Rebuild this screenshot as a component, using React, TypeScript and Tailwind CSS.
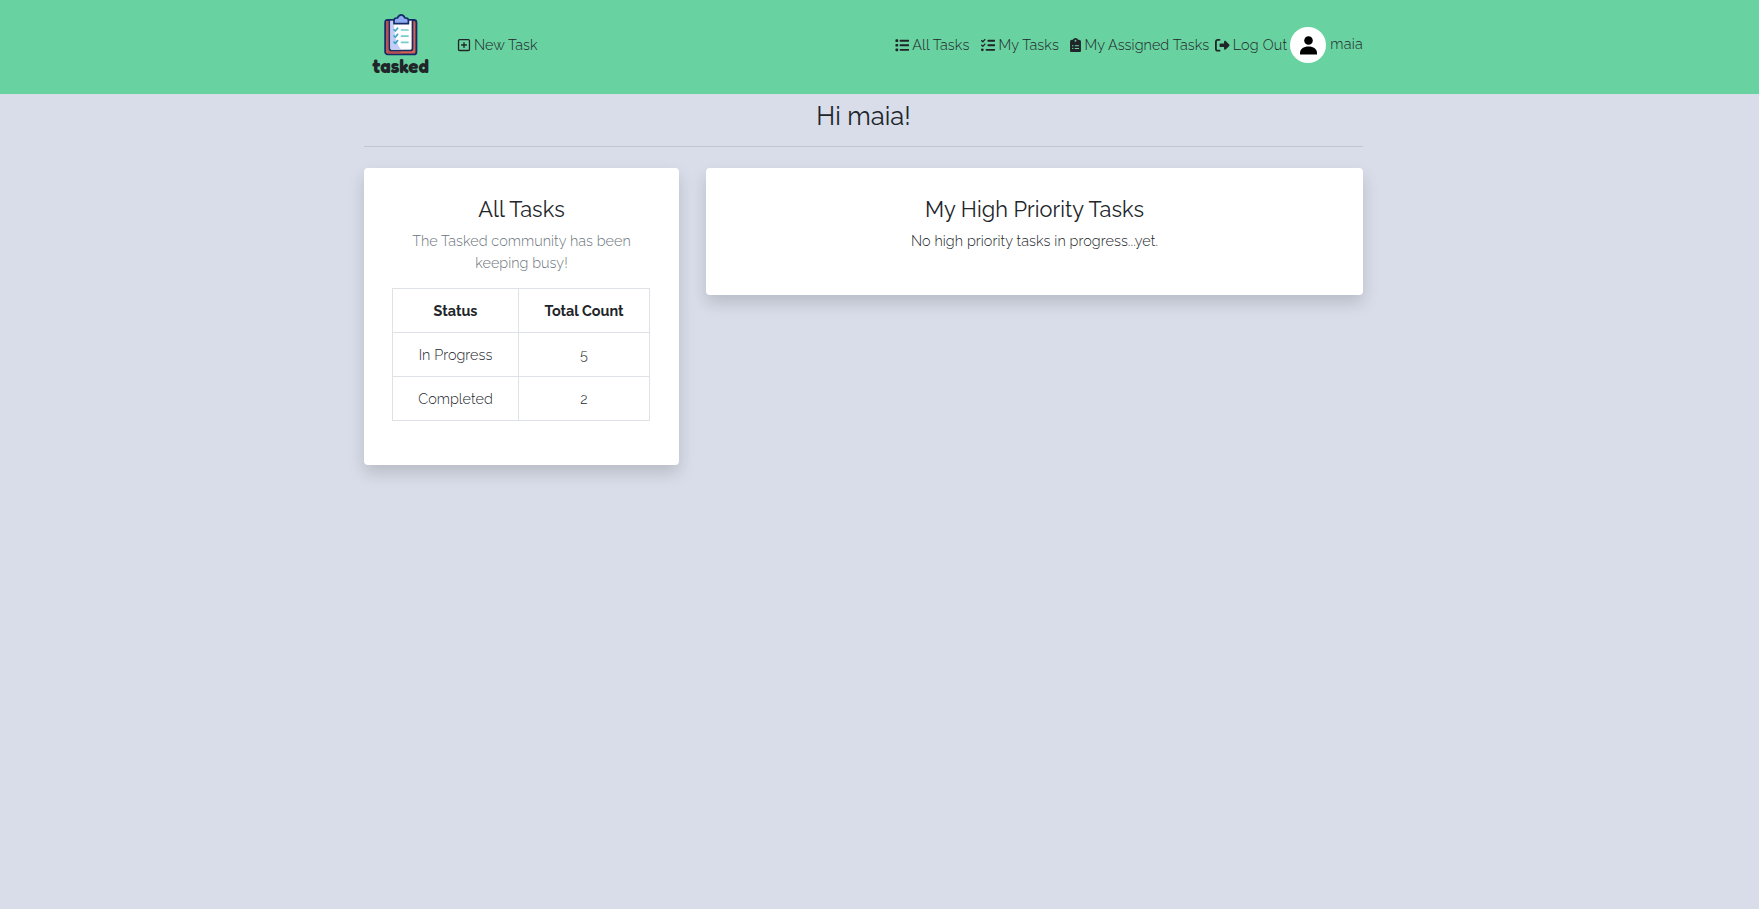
import type { ReactNode } from "react";
import { FaClipboardList, FaList, FaListCheck, FaRegSquarePlus, FaRightFromBracket } from "react-icons/fa6";

function Logo() {
  return (
    <a className="flex w-[73px] flex-col items-center" href="#">
      <svg className="mt-[14px] h-[42px] w-[34px]" viewBox="0 0 34 42">
        <rect x="1.2" y="6" width="31.2" height="34.4" rx="2.5" fill="#d9624f" stroke="#152c66" strokeWidth="1.9" />
        <path d="M2 7h4v29h8l4 3.500H3.500z" fill="#b54f52" />
        <path d="M5.500 6h23v28.500q0 2-2 2h-19q-2 0-2-2z" fill="#fff" stroke="#152c66" strokeWidth="1.700" />
        <path d="M6.400 7h3.600q0 22 7.500 28.600H8q-1.600 0-1.600-1.600z" fill="#c3cdf7" />
        <path d="M10 9.700V6.500q0-2.500 2.500-2.500h1q1.200-3.100 3.700-3.100t3.700 3.100h1q2.500 0 2.500 2.500v3.200z" fill="#8fabf2" stroke="#152c66" strokeWidth="1.700" strokeLinejoin="round" />
        <g fill="none" stroke="#3fa6c6" strokeWidth="1.700" strokeLinecap="round" strokeLinejoin="round">
          <path d="M10 15.800l1.300 1.200 2.300-2.800M10 22l1.300 1.200 2.300-2.800M10 28.200l1.300 1.200 2.300-2.800" />
          <path d="M17.500 16h6.500M17.500 22.200h6.500M17.500 28.300h6.500" stroke="#74cccb" />
        </g>
      </svg>
      <span className="font-['Fredoka','Raleway','Lato',sans-serif] text-[18.700px] leading-[20px] font-bold">
        tasked
      </span>
    </a>
  );
}

function NavLink({ icon, children, className = "" }: { icon: ReactNode; children: ReactNode; className?: string }) {
  return (
    <a href="#" className={`flex items-center gap-[3px] whitespace-nowrap ${className}`}>
      {icon}
      <span>{children}</span>
    </a>
  );
}

function Card({ title, className, children }: { title: string; className: string; children: ReactNode }) {
  return (
    <section className={`rounded-[4px] bg-white px-7 pt-[29px] text-center shadow-[0_8px_16px_rgba(0,0,0,0.15)] ${className}`}>
      <h2 className="mb-[7px] text-[21.760px] leading-[26px] font-normal tracking-[0.040px]">{title}</h2>
      {children}
    </section>
  );
}

const counts = [
  ["In Progress", "5"],
  ["Completed", "2"],
];

export default function App() {
  return (
    <div className="min-h-screen bg-[#d8dde9] pl-[364px] font-['Raleway','Lato',sans-serif] text-[14.400px] leading-[22px] font-light tracking-[0.055px] text-[#212529]">
      <header className="-ml-[364px] h-[94px] bg-[#68d2a0] pl-[364px]">
        <nav className="flex h-full w-[999px]">
          <Logo />
          <div className="ml-[20px] flex h-[90px] items-center">
            <NavLink icon={<FaRegSquarePlus className="h-[14px] w-[14px]" />}>New Task</NavLink>
          </div>
          <div className="ml-auto flex h-[90px] items-center">
            <NavLink className="tracking-[0.110px]" icon={<FaList className="h-[14.500px] w-[14.500px]" />}>All Tasks</NavLink>
            <NavLink className="ml-[11.500px] tracking-[0.110px]" icon={<FaListCheck className="h-[14.500px] w-[14.500px]" />}>My Tasks</NavLink>
            <NavLink className="ml-[11.500px] tracking-[0.080px]" icon={<FaClipboardList className="h-[14.500px] w-[11px]" />}>My Assigned Tasks</NavLink>
            <NavLink className="ml-[6px] tracking-[0.190px]" icon={<FaRightFromBracket className="h-[14.500px] w-[14.500px]" />}>Log Out</NavLink>
            <span className="ml-[3px] flex size-9 items-center justify-center rounded-full bg-white">
              <svg className="h-[19px] w-[17px]" viewBox="0 0 17 19" fill="#000">
                <circle cx="8.500" cy="4.500" r="4.300" />
                <path d="M0 18.500v-1.500C0 13 3.500 10.500 8.500 10.500S17 13 17 17v1.500z" />
              </svg>
            </span>
            <span className="ml-1 -mt-[2px] tracking-[0.300px]">maia</span>
          </div>
        </nav>
      </header>
      <main className="w-[999px]">
        <h1 className="pt-[7px] text-center text-[25.600px] leading-[31px] font-normal tracking-normal">Hi maia!</h1>
        <hr className="mt-[14px] mb-[21px] border-0 border-t border-[#c2c5d1]" />
        <div className="flex items-start gap-[27px]">
          <Card title="All Tasks" className="h-[297px] w-[315px]">
            <p className="mb-[14px] text-[#6c757d]">
              The Tasked community has been
              <br />
              keeping busy!
            </p>
            <table className="w-[258px] table-fixed border-collapse">
              <colgroup>
                <col className="w-[126px]" />
                <col />
              </colgroup>
              <thead>
                <tr className="h-11">
                  <th className="border border-[#dee2e6] font-bold tracking-normal">Status</th>
                  <th className="border border-[#dee2e6] font-bold tracking-normal">Total Count</th>
                </tr>
              </thead>
              <tbody>
                {counts.map(([status, total]) => (
                  <tr key={status} className="h-11">
                    <td className="border border-[#dee2e6]">{status}</td>
                    <td className="border border-[#dee2e6]">{total}</td>
                  </tr>
                ))}
              </tbody>
            </table>
          </Card>
          <Card title="My High Priority Tasks" className="h-[127px] w-[657px]">
            <p className="tracking-[0.090px]">No high priority tasks in progress...yet.</p>
          </Card>
        </div>
      </main>
    </div>
  );
}
